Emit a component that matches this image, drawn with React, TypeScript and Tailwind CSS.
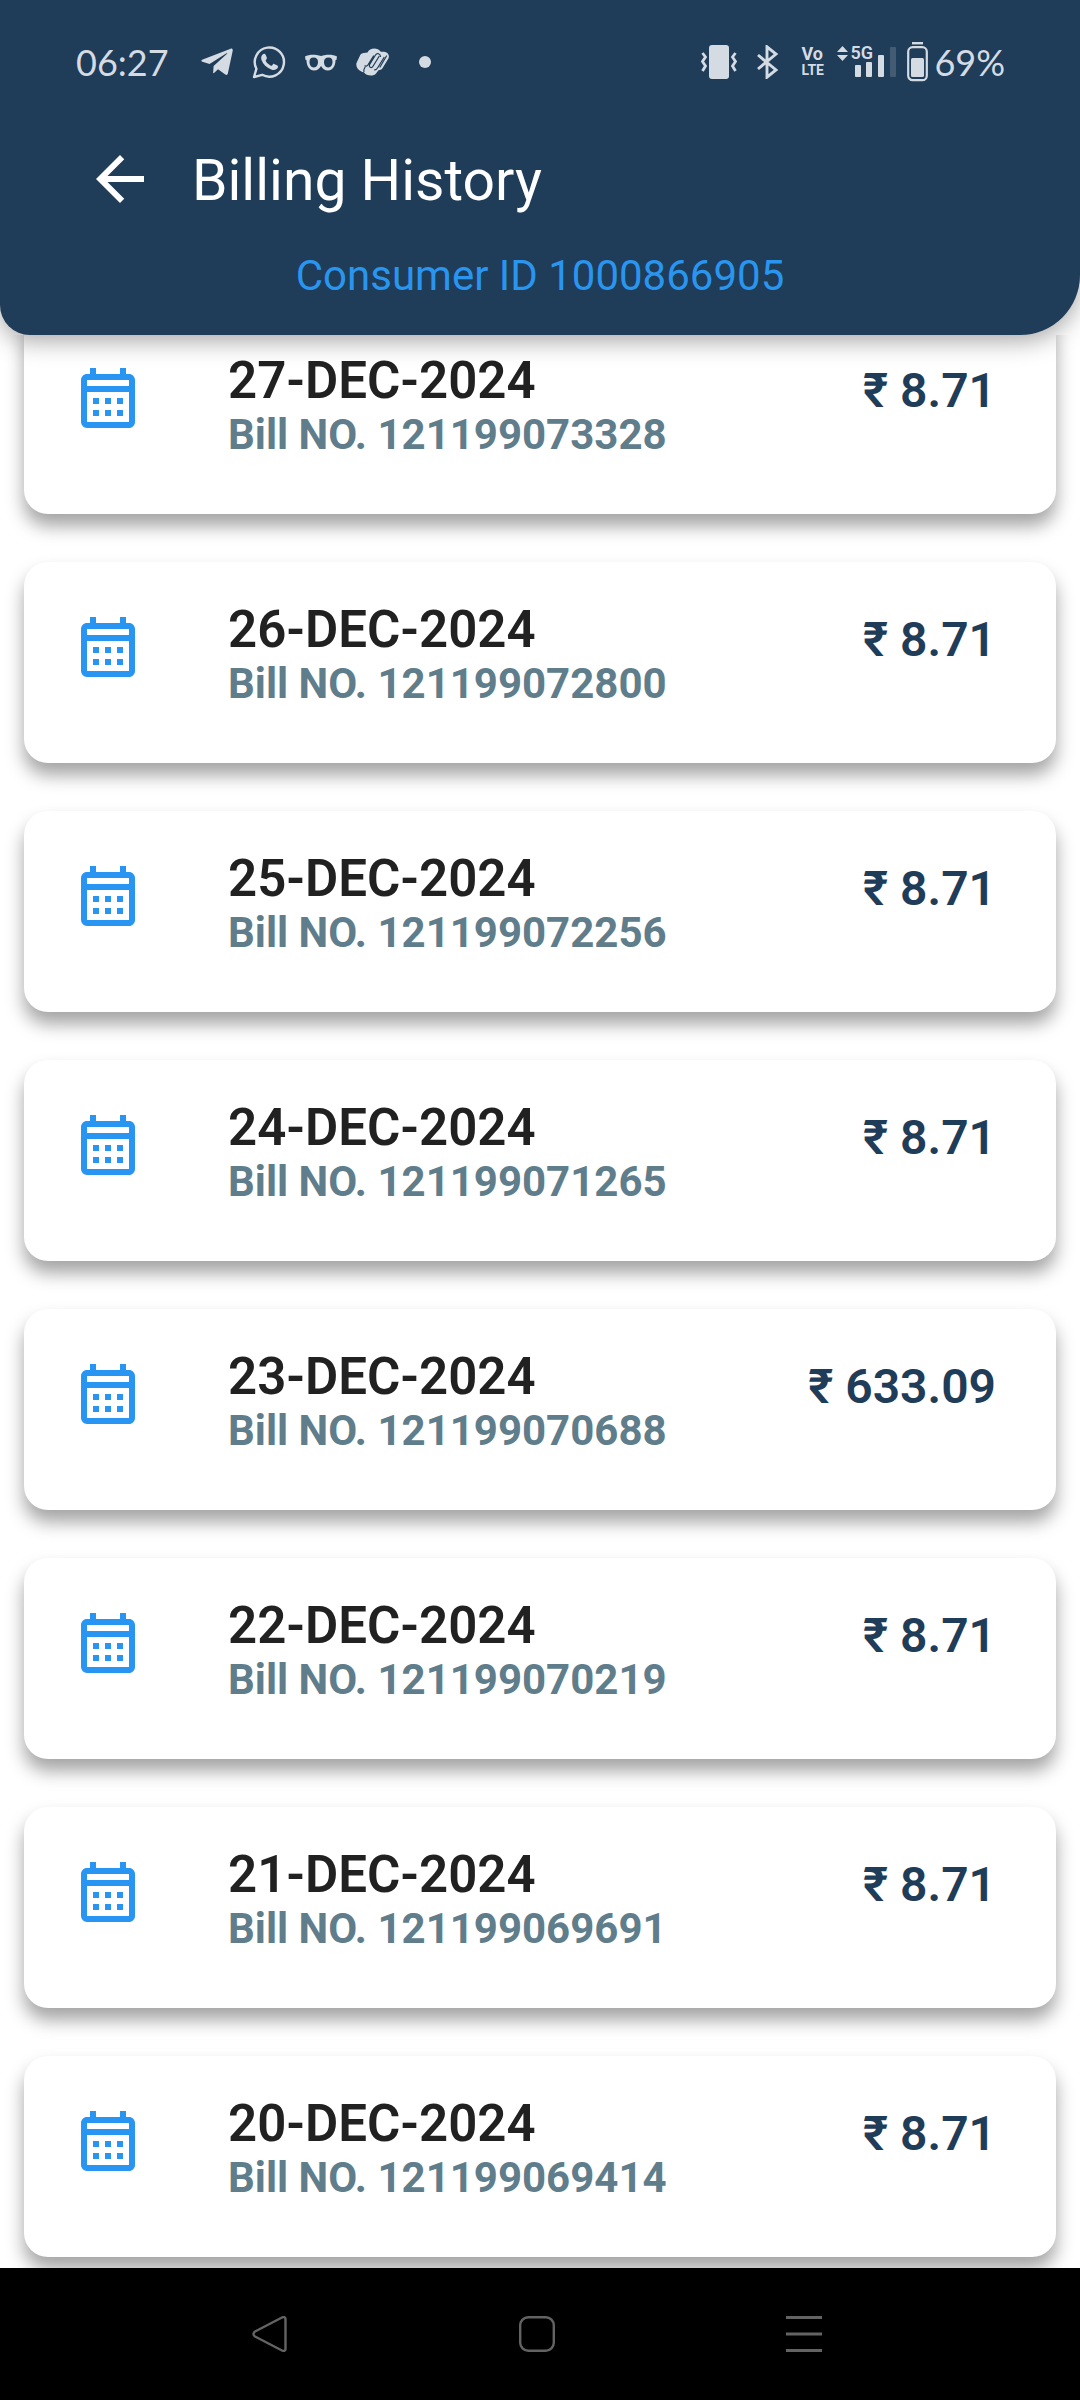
import React from "react";
import { MdArrowBack, MdOutlineCalendarMonth } from "react-icons/md";
import { FaTelegramPlane } from "react-icons/fa";

interface Bill {
  date: string;
  billNo: string;
  amount: string;
}

const bills: Bill[] = [
  { date: "27-DEC-2024", billNo: "121199073328", amount: "8.71" },
  { date: "26-DEC-2024", billNo: "121199072800", amount: "8.71" },
  { date: "25-DEC-2024", billNo: "121199072256", amount: "8.71" },
  { date: "24-DEC-2024", billNo: "121199071265", amount: "8.71" },
  { date: "23-DEC-2024", billNo: "121199070688", amount: "633.09" },
  { date: "22-DEC-2024", billNo: "121199070219", amount: "8.71" },
  { date: "21-DEC-2024", billNo: "121199069691", amount: "8.71" },
  { date: "20-DEC-2024", billNo: "121199069414", amount: "8.71" },
];

const WhatsappIcon = () => (
  <svg width="34" height="34" viewBox="0 0 34 34" fill="none">
    <path
      d="M2 32l2.4-8.2A14.6 14.6 0 1 1 10.200 29.800z"
      stroke="currentColor"
      strokeWidth="2.4"
      strokeLinejoin="round"
    />
    <path
      d="M10.600 9.400c.9-1 2.400-1 2.900.1l1.300 3c.3.8 0 1.300-.9 2.500-.3.400-.3.800 0 1.300 1.200 2 2.900 3.500 5 4.400.5.200.9.100 1.200-.3.900-1.100 1.300-1.800 2.100-1.500l3.200 1.500c1 .6.600 2.300-.2 3.200-1.500 1.600-3.700 1.700-6 .8-4.800-1.700-8-4.900-9.500-8.800-.9-2.300-.7-4.600.9-6.200z"
      fill="currentColor"
    />
  </svg>
);

const GlassesIcon = () => (
  <svg width="32" height="17" viewBox="0 0 32 17" fill="currentColor">
    <path
      fillRule="evenodd"
      d="M0 2.500C3 .3 11 .2 14 1.500c1.200.5 2.800.5 4 0 3-1.300 11-1.200 14 1l-.5 3.200-1 .6C30.500 12 27.500 16.500 23 16.500c-3.500 0-5.500-2-7-4.500-1.500 2.500-3.500 4.500-7 4.500C4.500 16.500 1.500 12 1.500 6.300l-1-.6zM8.500 3.500C5.500 3.500 4.500 5 4.500 8s1.500 5.400 4.300 5.400S13 11 13 8s-1.500-4.500-4.500-4.500zm15 0C20.500 3.500 19 5 19 8s1.400 5.400 4.200 5.400S27.500 11 27.500 8s-1-4.500-4-4.500z"
    />
  </svg>
);

const ScribbleIcon = () => (
  <svg width="34" height="28" viewBox="0 0 34 28" fill="none">
    <path
      d="M4.500 6.500C6 4.500 9 5 11.500 4.500 13.500-.8 22-.8 24.500 3.500c1 .6 2 .3 3.500.2 4 .2 6 3.800 4.300 7l-6 9.800c-.8 1.300-2.300 1.700-3.800 1.700l-2.500 3.300c-2.500 3.300-10 2.500-12-1.200C3 23.500-.5 19.500.500 15z"
      fill="currentColor"
    />
    <path
      d="M17.500 8l-5.300 8.500c-1.300 2.200-2.700 1.700-3.200 1.300M23 8.500l-6 9.800c-1.500 2.400-4.800.7-3.300-1.900L19.500 7c1.500-2.400 4.800-1.300 5 1.500M30.500 8l-6.500 11M28 9.500l-6 9.800c-.8 1.400-1.700 2.700-3.400 2.500M8 23.500c-.6-1.700.2-3 1-4.300"
      stroke="#1f3c58"
      strokeWidth="1.200"
      strokeLinecap="round"
    />
  </svg>
);

const VibrateIcon = () => (
  <svg width="36" height="34" viewBox="0 0 36 34" fill="none">
    <rect x="8" y="0" width="20" height="34" rx="3" fill="currentColor" />
    <path
      d="M1.500 8l3 4-3 4.500L4.500 21l-3 5M34.500 8l-3 4 3 4.500-3 4.500 3 5"
      stroke="currentColor"
      strokeWidth="2.800"
    />
  </svg>
);

const BluetoothIcon = () => (
  <svg width="22" height="34" viewBox="0 0 22 34" fill="none">
    <path
      d="M1 10l18 15-9 7.200V1.800L19 9 1 24"
      stroke="currentColor"
      strokeWidth="2.900"
    />
  </svg>
);

const SignalIcon = () => (
  <svg width="62" height="34" viewBox="0 0 62 34" fill="currentColor">
    <path d="M0 7l5.500-6L11 7zM0 10h11l-5.500 6z" />
    <rect x="18" y="20" width="6" height="12" rx="1" />
    <rect x="29" y="17" width="6" height="15" rx="1" />
    <rect x="41" y="10" width="6" height="22" rx="1" />
    <rect x="53" y="2" width="6" height="30" rx="1" opacity="0.200" />
  </svg>
);

const BatteryIcon = () => (
  <svg width="21" height="40" viewBox="0 0 21 40" fill="none">
    <path d="M5 1.200h11" stroke="currentColor" strokeWidth="2.400" />
    <rect x="1.200" y="5.200" width="18.600" height="33" rx="4.500" stroke="currentColor" strokeWidth="2.200" />
    <rect x="4" y="16" width="13" height="19" rx="1.500" fill="currentColor" />
  </svg>
);

const StatusBar = () => (
  <div className="flex h-[124px] items-center justify-between pr-[75px] pl-[76px] font-[Lato,sans-serif] text-4xl text-[#d5dbe3]">
    <div className="flex items-center">
      <span>06:27</span>
      <div className="ml-8 flex items-center gap-[19px]">
        <FaTelegramPlane className="h-9 w-8" />
        <WhatsappIcon />
        <GlassesIcon />
        <ScribbleIcon />
        <span className="ml-2.5 h-3 w-3 rounded-full bg-[#d5dbe3]" />
      </div>
    </div>
    <div className="flex items-center">
      <VibrateIcon />
      <div className="ml-5">
        <BluetoothIcon />
      </div>
      <div className="ml-[22px] w-6 font-[Roboto,sans-serif] leading-4 font-bold">
        <div className="text-lg leading-4">Vo</div>
        <div className="text-sm leading-4">LTE</div>
      </div>
      <div className="relative ml-3">
        <SignalIcon />
        <span className="absolute top-0 left-[13px] font-[Roboto,sans-serif] text-lg leading-4 font-semibold">
          5G
        </span>
      </div>
      <div className="ml-2">
        <BatteryIcon />
      </div>
      <span className="ml-1.5">69%</span>
    </div>
  </div>
);

const Header = () => (
  <header className="relative z-10 h-[335px] rounded-br-[60px] rounded-bl-[30px] bg-[#1f3c58] shadow-[0_6px_24px_rgba(0,0,0,0.35)]">
    <StatusBar />
    <div className="flex h-[110px] items-center gap-9 pl-[84px]">
      <button type="button" aria-label="Back" className="text-white">
        <MdArrowBack className="h-[72px] w-[72px]" />
      </button>
      <h1 className="pt-1 text-[57px] leading-[72px] text-white">Billing History</h1>
    </div>
    <p className="mt-4 text-center text-[42px] leading-[52px] text-[#2a95ee]">
      Consumer ID 1000866905
    </p>
  </header>
);

const BillCard: React.FC<{ bill: Bill }> = ({ bill }) => (
  <li className="flex h-[201px] items-start rounded-3xl bg-white pr-[60px] pl-12 shadow-[0_12px_18px_rgba(0,0,0,0.36)]">
    <MdOutlineCalendarMonth className="mt-[49px] h-[72px] w-[72px] shrink-0 text-[#2795f1]" />
    <div className="mt-[38px] ml-[84px] flex-1">
      <h2 className="text-[51px] leading-[60px] font-semibold text-[#212121]">{bill.date}</h2>
      <p className="text-[42px] leading-[48px] font-bold text-[#607d8b]">
        Bill NO. {bill.billNo}
      </p>
    </div>
    <p className="mt-[50px] text-5xl leading-[56px] font-semibold text-[#1f3c58]">
      ₹ {bill.amount}
    </p>
  </li>
);

const NavBar = () => (
  <nav className="grid h-[132px] grid-cols-3 items-center bg-black pr-[143px] pl-[136px] text-[#636363]">
    <button type="button" aria-label="Back" className="justify-self-center">
      <svg width="36" height="36" viewBox="0 0 36 36" fill="none">
        <path
          d="M3 15.500L30 1.500c2-1 3.500 0 3.500 1.500v30c0 1.500-1.500 2.500-3.500 1.500L3 20.500c-2-1.300-2-3.700 0-5z"
          stroke="currentColor"
          strokeWidth="2.400"
        />
      </svg>
    </button>
    <button type="button" aria-label="Home" className="justify-self-center">
      <svg width="36" height="36" viewBox="0 0 36 36" fill="none">
        <rect x="1.200" y="1.200" width="33.600" height="33.600" rx="8" stroke="currentColor" strokeWidth="2.400" />
      </svg>
    </button>
    <button type="button" aria-label="Recent apps" className="justify-self-center">
      <svg width="36" height="36" viewBox="0 0 36 36" fill="none">
        <path d="M0 1.500h36M0 18h36M0 34.500h36" stroke="currentColor" strokeWidth="3" />
      </svg>
    </button>
  </nav>
);

const App: React.FC = () => {
  return (
    <div className="flex min-h-screen flex-col bg-white font-[Roboto,sans-serif]">
      <Header />
      <main className="flex-1 overflow-hidden px-6 pb-[11px]">
        {/* the list is scrolled a little under the header */}
        <ul className="-mt-[22px] flex flex-col gap-12">
          {bills.map((bill) => (
            <BillCard key={bill.billNo} bill={bill} />
          ))}
        </ul>
      </main>
      <NavBar />
    </div>
  );
};

export default App;
